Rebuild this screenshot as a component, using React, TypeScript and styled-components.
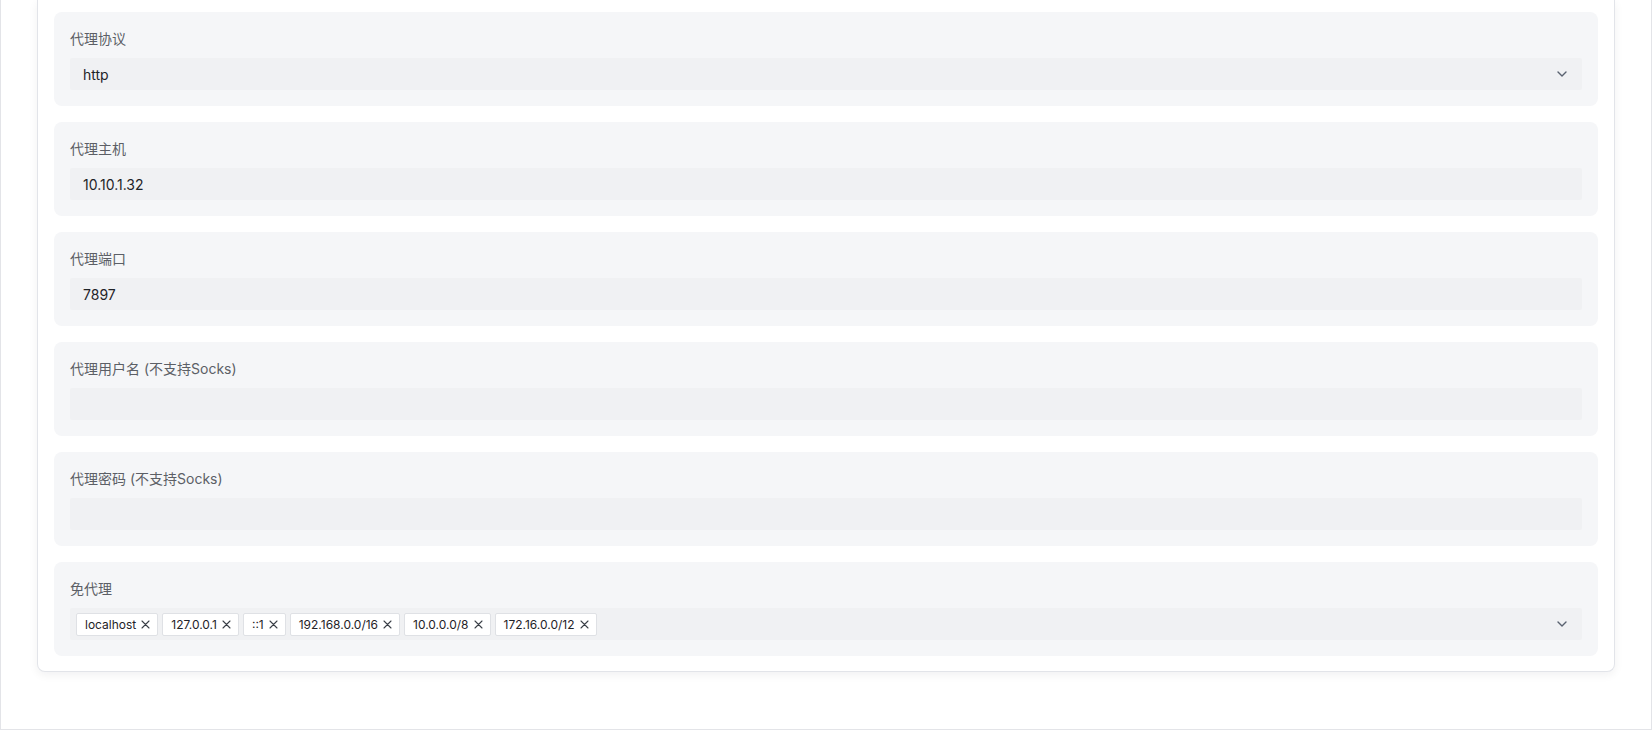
import React from "react";
import styled, { createGlobalStyle } from "styled-components";

const GlobalStyle = createGlobalStyle`
  html, body {
    margin: 0;
    padding: 0;
    background: #ffffff;
    font-family: Inter, "Noto Sans CJK SC", sans-serif;
    overflow: hidden;
  }
`;

const Page = styled.div`
  box-sizing: border-box;
  width: 1652px;
  height: 730px;
  border: 1px solid #e3e4e8;
  border-top: none;
  padding: 0 36px;
  background: #ffffff;
`;

const Card = styled.div`
  background: #ffffff;
  border: 1px solid #e2e4e9;
  border-top: none;
  border-radius: 0 0 8px 8px;
  box-shadow: 0 3px 10px rgba(15, 23, 42, 0.06);
  padding: 12px 16px 15px;
  display: flex;
  flex-direction: column;
  gap: 16px;
`;

const Section = styled.div`
  background: #f5f6f8;
  border-radius: 8px;
  padding: 16px;
  display: flex;
  flex-direction: column;
`;

const Label = styled.div`
  font-size: 14px;
  line-height: 22px;
  color: #5c5f66;
  margin-bottom: 8px;
`;

const Field = styled.div`
  height: 32px;
  box-sizing: border-box;
  background: #f0f1f3;
  border-radius: 2px;
  padding: 0 15px 0 13px;
  display: flex;
  align-items: center;
  font-size: 14px;
  color: #1f2328;
`;

const Value = styled.span`
  flex: 1;
`;

const TagField = styled(Field)`
  padding-left: 6px;
  gap: 4px;
`;

const Tag = styled.span`
  height: 23px;
  box-sizing: border-box;
  display: inline-flex;
  align-items: center;
  gap: 5px;
  padding: 0 7px 0 8px;
  background: #ffffff;
  border: 1px solid #dfe1e5;
  border-radius: 2px;
  font-size: 12px;
  color: #1f2328;
`;

const Spacer = styled.span`
  flex: 1;
`;

const Chevron = () => (
  <svg width="10" height="6" viewBox="0 0 10 6" fill="none">
    <polyline
      points="1,1 5,5 9,1"
      stroke="#5a6270"
      strokeWidth="1.4"
      strokeLinecap="round"
      strokeLinejoin="round"
    />
  </svg>
);

const Close = () => (
  <svg width="9" height="9" viewBox="0 0 9 9" fill="none">
    <path
      d="M1 1 L8 8 M8 1 L1 8"
      stroke="#3a3f47"
      strokeWidth="1.1"
      strokeLinecap="round"
    />
  </svg>
);

const fields = [
  { label: "代理协议", value: "http", select: true },
  { label: "代理主机", value: "10.10.1.32" },
  { label: "代理端口", value: "7897" },
  { label: "代理用户名 (不支持Socks)", value: "" },
  { label: "代理密码 (不支持Socks)", value: "" },
];

const noProxy = [
  "localhost",
  "127.0.0.1",
  "::1",
  "192.168.0.0/16",
  "10.0.0.0/8",
  "172.16.0.0/12",
];

const App = () => {
  return (
    <>
      <GlobalStyle />
      <Page>
        <Card>
          {fields.map((f) => (
            <Section key={f.label}>
              <Label>{f.label}</Label>
              <Field>
                <Value>{f.value}</Value>
                {f.select && <Chevron />}
              </Field>
            </Section>
          ))}
          <Section>
            <Label>免代理</Label>
            <TagField>
              {noProxy.map((t) => (
                <Tag key={t}>
                  {t}
                  <Close />
                </Tag>
              ))}
              <Spacer />
              <Chevron />
            </TagField>
          </Section>
        </Card>
      </Page>
    </>
  );
};

export default App;
